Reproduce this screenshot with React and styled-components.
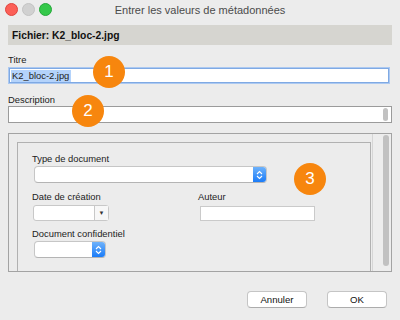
import React from 'react'
import styled, { createGlobalStyle } from 'styled-components'

const GlobalStyle = createGlobalStyle`
  html, body {
    margin: 0;
    padding: 0;
    background: #ececec;
  }
  body {
    font-family: "Liberation Sans", Arial, sans-serif;
    color: #222222;
  }
`

function Chevrons() {
  return (
    <svg width="7" height="10" viewBox="0 0 7 10">
      <path d="M1 4 L3.5 1.5 L6 4 M1 6 L3.5 8.5 L6 6" fill="none" stroke="#ffffff" strokeWidth="1.1" />
    </svg>
  )
}

function App() {
  return (
    <Window>
      <GlobalStyle />
      <TitleBar>
        <Lights>
          <Light color="#fc5f57" border="#e0443e" />
          <Light color="#d1d1d1" border="#c3c3c3" />
          <Light color="#35c84a" border="#25a83a" />
        </Lights>
        <TitleText>Entrer les valeurs de métadonnées</TitleText>
      </TitleBar>

      <Body>
        <FileBar>Fichier: K2_bloc-2.jpg</FileBar>

        <Label top={8}>Titre</Label>
        <TitleInput>
          <Selected>K2_bloc-2.jpg</Selected>
        </TitleInput>

        <Label top={10}>Description</Label>
        <TextArea>
          <SmallThumb />
        </TextArea>

        <ScrollPanel>
          <ScrollContent>
            <InnerPanel>
              <Label>Type de document</Label>
              <Select width={233}>
                <SelectButton><Chevrons /></SelectButton>
              </Select>

              <Grid>
                <div>
                  <Label>Date de création</Label>
                  <Combo>
                    <ComboButton>▼</ComboButton>
                  </Combo>
                </div>
                <div>
                  <Label>Auteur</Label>
                  <TextField />
                </div>
              </Grid>

              <Label top={6}>Document confidentiel</Label>
              <Select width={72}>
                <SelectButton><Chevrons /></SelectButton>
              </Select>
            </InnerPanel>
          </ScrollContent>
          <ScrollTrack>
            <Thumb />
          </ScrollTrack>
        </ScrollPanel>

        <Footer>
          <Button>Annuler</Button>
          <Button>OK</Button>
        </Footer>
      </Body>

      <Badge x={109} y={72}>1</Badge>
      <Badge x={88} y={111}>2</Badge>
      <Badge x={310} y={179}>3</Badge>
    </Window>
  )
}

export default App

const Window = styled.div`
  position: relative;
  width: 400px;
  height: 320px;
  background: #ececec;
  overflow: hidden;
  display: flex;
  flex-direction: column;
`
const TitleBar = styled.div`
  height: 18px;
  display: flex;
  align-items: center;
  justify-content: center;
  position: relative;
`
const Lights = styled.div`
  position: absolute;
  left: 5px;
  top: 3px;
  display: flex;
  gap: 4px;
`
const Light = styled.div`
  width: 11px;
  height: 11px;
  border-radius: 50%;
  background: ${(props) => props.color};
  border: 0.5px solid ${(props) => props.border};
`
const TitleText = styled.div`
  font-size: 11px;
  color: #4b4b4b;
  margin-top: 1px;
`
const Body = styled.div`
  flex: 1;
  display: flex;
  flex-direction: column;
  padding: 7px 8px 0 8px;
`
const FileBar = styled.div`
  height: 20px;
  background: #d6d5d0;
  display: flex;
  align-items: center;
  padding-left: 4px;
  font-size: 10.3px;
  font-weight: bold;
  color: #111111;
`
const Label = styled.div`
  font-size: 9.4px;
  line-height: 13px;
  height: 13px;
  margin-top: ${(props) => props.top || 0}px;
  color: #222222;
  white-space: nowrap;
`
const TitleInput = styled.div`
  margin: 2px 3px 0 1px;
  height: 13px;
  background: #ffffff;
  border: 1px solid #7fa9e3;
  box-shadow: 0 0 0 1px #acc9f1;
  display: flex;
  align-items: center;
  padding-left: 1px;
`
const Selected = styled.span`
  background: #b4d3fb;
  font-size: 9.4px;
  line-height: 12px;
  padding: 0 2px 0 1px;
`
const TextArea = styled.div`
  height: 15px;
  background: #ffffff;
  border: 1px solid #9b9b9b;
  display: flex;
  justify-content: flex-end;
  align-items: center;
  padding-right: 3px;
`
const SmallThumb = styled.div`
  width: 5px;
  height: 13px;
  border-radius: 3px;
  background: #c2c2c2;
`
const ScrollPanel = styled.div`
  margin-top: 10px;
  height: 137px;
  border: 1px solid #a3a3a3;
  display: flex;
  overflow: hidden;
`
const ScrollContent = styled.div`
  flex: 1;
  padding: 8px 1px 0 8px;
`
const InnerPanel = styled.div`
  height: 140px;
  border: 1px solid #b1b1b1;
  border-bottom: none;
  padding: 9px 14px 0 14px;
`
const Select = styled.div`
  margin: 1px 0 0 2px;
  width: ${(props) => props.width}px;
  height: 16px;
  background: #ffffff;
  border: 1px solid #c6c6c6;
  border-bottom-color: #b4b4b4;
  border-radius: 4px;
  display: flex;
  justify-content: flex-end;
  overflow: hidden;
  box-sizing: border-box;
  height: 17px;
`
const SelectButton = styled.div`
  width: 13px;
  background: linear-gradient(#6eb2fb, #1b7cf8);
  display: flex;
  align-items: center;
  justify-content: center;
`
const Grid = styled.div`
  display: grid;
  grid-template-columns: 166px 1fr;
  margin-top: 7px;
`
const Combo = styled.div`
  margin: 2px 0 0 1px;
  width: 76px;
  height: 16px;
  box-sizing: border-box;
  background: #ffffff;
  border: 1px solid #c8c8c8;
  border-radius: 3px;
  display: flex;
  justify-content: flex-end;
`
const ComboButton = styled.div`
  width: 13px;
  border-left: 1px solid #c8c8c8;
  background: #f7f7f7;
  font-size: 6px;
  color: #333333;
  display: flex;
  align-items: center;
  justify-content: center;
`
const TextField = styled.div`
  margin: 3px 0 0 2px;
  width: 115px;
  height: 15px;
  box-sizing: border-box;
  background: #ffffff;
  border: 1px solid #cacaca;
`
const ScrollTrack = styled.div`
  width: 19px;
  border-left: 1px solid #d6d6d6;
  background: #ededed;
  padding: 1px 0 0 10px;
  box-sizing: border-box;
`
const Thumb = styled.div`
  width: 6px;
  height: 131px;
  border-radius: 3px;
  background: #c1c1c1;
`
const Footer = styled.div`
  margin-top: 19px;
  display: flex;
  justify-content: flex-end;
  gap: 20px;
  padding-right: 5px;
`
const Button = styled.button`
  width: 60px;
  height: 17px;
  padding: 0;
  background: #ffffff;
  border: 1px solid #c5c5c5;
  border-bottom-color: #acacac;
  border-radius: 4px;
  font-family: "Liberation Sans", Arial, sans-serif;
  font-size: 9.6px;
  color: #111111;
`
const Badge = styled.div`
  position: absolute;
  left: ${(props) => props.x - 16}px;
  top: ${(props) => props.y - 16}px;
  width: 32px;
  height: 32px;
  border-radius: 50%;
  background: #f7860e;
  color: #ffffff;
  font-size: 17px;
  display: flex;
  align-items: center;
  justify-content: center;
`
